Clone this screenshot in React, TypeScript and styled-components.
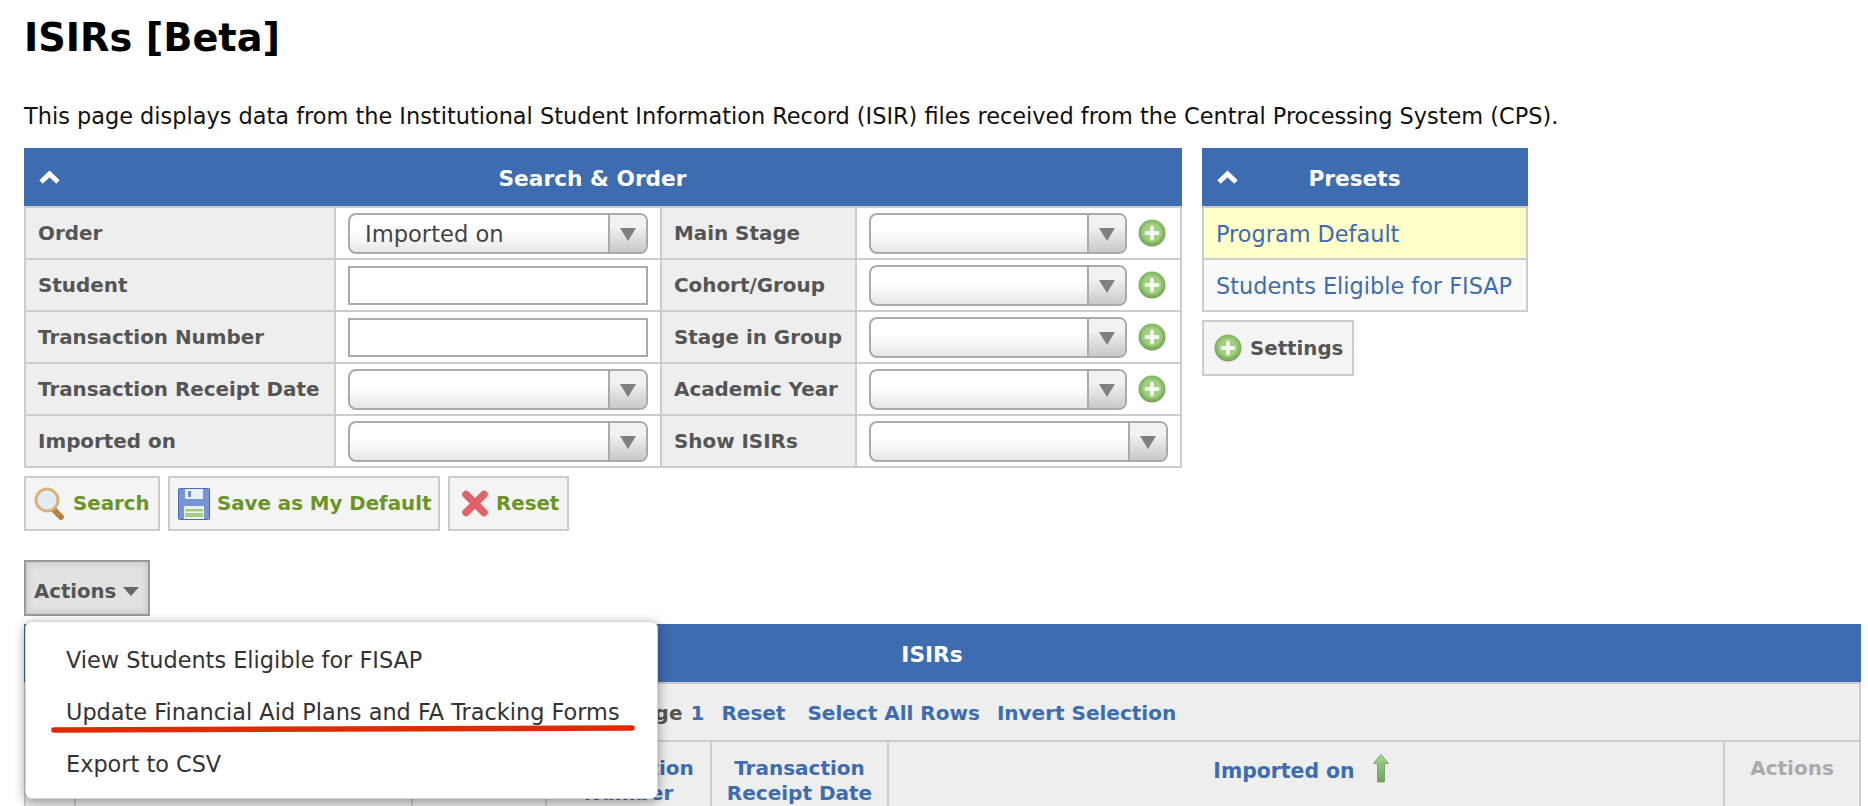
import styled, { createGlobalStyle } from "styled-components";

const GlobalStyle = createGlobalStyle`
  html, body {
    margin: 0;
    padding: 0;
    background: #fff;
    font-family: "DejaVu Sans", Verdana, sans-serif;
    font-size: 20px;
  }
`;

const Chevron = () => (
  <ChevronIcon width="21" height="14" viewBox="0 0 21 14">
    <path d="M2 12 L10.5 4 L19 12" fill="none" stroke="#fff" strokeWidth="5" />
  </ChevronIcon>
);

const PlusIcon = () => (
  <svg width="28" height="28" viewBox="0 0 28 28">
    <defs>
      <radialGradient id="plusFill" cx="50%" cy="45%" r="55%">
        <stop offset="0%" stopColor="#a9d38a" />
        <stop offset="70%" stopColor="#8fc06d" />
        <stop offset="100%" stopColor="#6fa050" />
      </radialGradient>
    </defs>
    <circle cx="14" cy="14" r="13.5" fill="url(#plusFill)" />
    <circle cx="14" cy="13.5" r="9.5" fill="#a0cf80" />
    <path d="M14 8.5 V19.5 M8.5 14 H19.5" stroke="#f4f8ee" strokeWidth="4" strokeLinecap="round" />
  </svg>
);

const SearchIcon = () => (
  <svg width="32" height="33" viewBox="0 0 32 33">
    <path d="M20 23 L27 30" stroke="#b9813f" strokeWidth="6" strokeLinecap="round" />
    <circle cx="13" cy="13" r="11" fill="#e3ebf5" stroke="#d9b27a" strokeWidth="3" />
  </svg>
);

const SaveIcon = () => (
  <svg width="32" height="32" viewBox="0 0 32 32">
    <rect x="0.5" y="0.5" width="31" height="31" rx="1" fill="#7394d6" stroke="#4a6cb8" />
    <rect x="7" y="1" width="18" height="10" fill="#e9eef8" />
    <rect x="10" y="3" width="3" height="6" fill="#6f8fcf" />
    <rect x="6" y="18" width="20" height="13" fill="#eef2ea" />
    <rect x="7" y="21" width="18" height="2.5" fill="#a8cc85" />
    <rect x="7" y="25" width="18" height="4" fill="#a8cc85" />
  </svg>
);

const CrossIcon = () => (
  <svg width="28" height="27" viewBox="0 0 28 27">
    <path d="M5 4.5 L23 22.5 M23 4.5 L5 22.5" stroke="#e0636a" strokeWidth="7.5" strokeLinecap="round" />
  </svg>
);

const UpArrow = () => (
  <svg width="16" height="29" viewBox="0 0 16 29">
    <defs>
      <linearGradient id="arrowFill" x1="0" y1="0" x2="0" y2="1">
        <stop offset="0%" stopColor="#a5d592" />
        <stop offset="100%" stopColor="#6ba35f" />
      </linearGradient>
    </defs>
    <path d="M8 0.5 L15.5 9.5 H11.5 V28 H4.5 V9.5 H0.5 Z" fill="url(#arrowFill)" stroke="#7aa96c" />
  </svg>
);

const SelectBox = ({ value }: { value?: string }) => (
  <Select>
    <SelectValue>{value}</SelectValue>
    <SelectArrow />
  </Select>
);

const filters = [
  { label: "Order", kind: "select", value: "Imported on", label2: "Main Stage", plus: true },
  { label: "Student", kind: "input", label2: "Cohort/Group", plus: true },
  { label: "Transaction Number", kind: "input", label2: "Stage in Group", plus: true },
  { label: "Transaction Receipt Date", kind: "select", label2: "Academic Year", plus: true },
  { label: "Imported on", kind: "select", label2: "Show ISIRs", plus: false },
];

const App = () => {
  return (
    <Page>
      <GlobalStyle />
      <Title>ISIRs [Beta]</Title>
      <Intro>
        This page displays data from the Institutional Student Information Record (ISIR) files
        received from the Central Processing System (CPS).
      </Intro>

      <TopRow>
        <SearchPanel>
          <PanelHeader>
            <Chevron />
            <PanelTitle>Search &amp; Order</PanelTitle>
          </PanelHeader>
          <FilterGrid>
            {filters.map((f) => (
              <FilterRow key={f.label}>
                <Label>{f.label}</Label>
                <Value $pr={12}>
                  {f.kind === "select" ? <SelectBox value={f.value} /> : <TextInput type="text" />}
                </Value>
                <Label>{f.label2}</Label>
                <Value $pr={f.plus ? 14 : 12}>
                  <SelectBox />
                  {f.plus && <PlusIcon />}
                </Value>
              </FilterRow>
            ))}
          </FilterGrid>
          <ButtonRow>
            <ToolButton $w={136} $pad={8}>
              <SearchIcon />
              Search
            </ToolButton>
            <ToolButton $w={272} $pad={8}>
              <SaveIcon />
              Save as My Default
            </ToolButton>
            <ToolButton $w={121} $pad={11}>
              <CrossIcon />
              Reset
            </ToolButton>
          </ButtonRow>
        </SearchPanel>

        <PresetsPanel>
          <PanelHeader>
            <Chevron />
            <PanelTitle>Presets</PanelTitle>
          </PanelHeader>
          <PresetList>
            <PresetItem $active>Program Default</PresetItem>
            <PresetItem>Students Eligible for FISAP</PresetItem>
          </PresetList>
          <SettingsButton>
            <PlusIcon />
            Settings
          </SettingsButton>
        </PresetsPanel>
      </TopRow>

      <ActionsWrap>
        <ActionsButton>
          Actions
          <Caret />
        </ActionsButton>
        <Menu>
          <MenuItem>View Students Eligible for FISAP</MenuItem>
          <MenuItem>Update Financial Aid Plans and FA Tracking Forms</MenuItem>
          <MenuItem>Export to CSV</MenuItem>
          <RedLine width="590" height="12" viewBox="0 0 590 12">
            <path d="M4 8 L582 6" stroke="#e02b00" strokeWidth="5.5" strokeLinecap="round" />
          </RedLine>
        </Menu>
      </ActionsWrap>

      <ResultsPanel>
        <PanelHeader>
          <Chevron />
          <PanelTitle>ISIRs</PanelTitle>
        </PanelHeader>
        <Toolbar>
          <PageLabel>Page</PageLabel>
          <ToolLink $ml={8}>1</ToolLink>
          <ToolLink $ml={17}>Reset</ToolLink>
          <ToolLink $ml={22}>Select All Rows</ToolLink>
          <ToolLink $ml={17}>Invert Selection</ToolLink>
        </Toolbar>
        <ColumnRow>
          <ColumnHead />
          <ColumnHead />
          <ColumnHead />
          <ColumnHead>
            Transaction
            <br />
            Number
          </ColumnHead>
          <ColumnHead>
            Transaction
            <br />
            Receipt Date
          </ColumnHead>
          <ImportedHead>
            Imported on
            <UpArrow />
          </ImportedHead>
          <ColumnHead $muted>Actions</ColumnHead>
        </ColumnRow>
      </ResultsPanel>
    </Page>
  );
};

export default App;

const Page = styled.div`
  box-sizing: border-box;
  width: 1868px;
  height: 806px;
  padding: 0 7px 0 24px;
  overflow: hidden;
`;

const Title = styled.h1`
  margin: 0;
  padding-top: 16px;
  font-size: 38.3px;
  line-height: 44px;
  font-weight: bold;
  color: #000;
`;

const Intro = styled.p`
  margin: 34px 0 0;
  font-size: 22.43px;
  line-height: 44px;
  color: #111;
  white-space: nowrap;
`;

const TopRow = styled.div`
  display: flex;
  align-items: flex-start;
  gap: 20px;
  margin-top: 10px;
`;

const SearchPanel = styled.div`
  width: 1158px;
`;

const PresetsPanel = styled.div`
  width: 326px;
`;

const PanelHeader = styled.div`
  display: flex;
  align-items: center;
  box-sizing: border-box;
  height: 58px;
  padding: 0 36px 0 15px;
  background: #3d6cb0;
  color: #fff;
`;

const ChevronIcon = styled.svg`
  flex: none;
  margin-right: -21px;
`;

const PanelTitle = styled.div`
  flex: 1;
  padding-top: 2px;
  text-align: center;
  font-weight: bold;
  font-size: 21.7px;
`;

const FilterGrid = styled.div`
  display: grid;
  grid-template-columns: 308px 324px 193px 323px;
  grid-auto-rows: 50px;
  gap: 2px;
  padding: 2px;
  background: #ccc;
`;

const FilterRow = styled.div`
  display: contents;
`;

const Label = styled.div`
  display: flex;
  align-items: center;
  padding-left: 12px;
  background: #eee;
  color: #555;
  font-weight: bold;
  font-size: 19.9px;
  white-space: nowrap;
`;

const Value = styled.div<{ $pr: number }>`
  display: flex;
  align-items: center;
  gap: 11px;
  padding: 0 ${(p) => p.$pr}px 0 12px;
  background: #fff;
`;

const Select = styled.div`
  flex: 1;
  display: flex;
  align-items: stretch;
  box-sizing: border-box;
  height: 41px;
  border: 2px solid #aaa;
  border-radius: 8px;
  overflow: hidden;
  background: linear-gradient(to bottom, #fff 45%, #e6e6e6 100%);
`;

const SelectValue = styled.div`
  flex: 1;
  padding-left: 15px;
  line-height: 38px;
  font-size: 22.6px;
  color: #444;
`;

const SelectArrow = styled.div`
  position: relative;
  flex: none;
  width: 36px;
  border-left: 2px solid #aaa;
  background: linear-gradient(to bottom, #f2f2f2 30%, #c9c9c9 100%);

  &::after {
    content: "";
    position: absolute;
    left: 10px;
    top: 13px;
    border-left: 8px solid transparent;
    border-right: 8px solid transparent;
    border-top: 13px solid #808080;
  }
`;

const TextInput = styled.input`
  flex: 1;
  min-width: 0;
  box-sizing: border-box;
  height: 39px;
  border: 2px solid #aaa;
  background: #fff;
  outline: none;
`;

const ButtonRow = styled.div`
  display: flex;
  gap: 8px;
  margin-top: 8px;
`;

const ToolButton = styled.div<{ $w: number; $pad: number }>`
  display: flex;
  align-items: center;
  gap: 7px;
  box-sizing: border-box;
  width: ${(p) => p.$w}px;
  height: 55px;
  padding-left: ${(p) => p.$pad}px;
  border: 2px solid #ccc;
  background: #f4f4f4;
  color: #6b9427;
  font-weight: bold;
  font-size: 19.8px;
  white-space: nowrap;
`;

const PresetList = styled.div`
  display: flex;
  flex-direction: column;
  gap: 2px;
  padding: 2px;
  background: #ccc;
`;

const PresetItem = styled.div<{ $active?: boolean }>`
  display: flex;
  align-items: center;
  height: 50px;
  padding: 2px 0 0 12px;
  box-sizing: border-box;
  background: ${(p) => (p.$active ? "#ffc" : "#f9f9f9")};
  color: #3d6cb0;
  font-size: 22.4px;
  white-space: nowrap;
`;

const SettingsButton = styled.div`
  display: flex;
  align-items: center;
  gap: 8px;
  box-sizing: border-box;
  width: 152px;
  height: 56px;
  margin-top: 8px;
  padding-left: 10px;
  border: 2px solid #ccc;
  background: #f4f4f4;
  color: #555;
  font-weight: bold;
  font-size: 19.8px;
`;

const ActionsWrap = styled.div`
  position: relative;
  margin-top: 29px;
  height: 56px;
`;

const ActionsButton = styled.div`
  display: flex;
  align-items: center;
  gap: 7px;
  box-sizing: border-box;
  width: 126px;
  height: 56px;
  padding: 7px 0 0 8px;
  border: 2px solid #999;
  background: #e2e2e2;
  box-shadow: inset 0 0 10px rgba(0, 0, 0, 0.14);
  color: #555;
  font-weight: bold;
  font-size: 19.7px;
`;

const Caret = styled.span`
  margin-top: 0;
  border-left: 8px solid transparent;
  border-right: 8px solid transparent;
  border-top: 9px solid #666;
`;

const Menu = styled.div`
  position: absolute;
  z-index: 5;
  top: 61px;
  left: 1px;
  box-sizing: border-box;
  width: 633px;
  height: 178px;
  padding: 12px 0 0;
  border: 1px solid #d4d4d4;
  border-radius: 7px;
  background: #fff;
  box-shadow: 0 3px 12px rgba(0, 0, 0, 0.4);
`;

const MenuItem = styled.div`
  height: 52px;
  padding-left: 40px;
  line-height: 52px;
  font-size: 22.4px;
  color: #333;
  white-space: nowrap;
`;

const RedLine = styled.svg`
  position: absolute;
  left: 24px;
  top: 100px;
`;

const ResultsPanel = styled.div`
  margin-top: 8px;
`;

const Toolbar = styled.div`
  display: flex;
  align-items: center;
  box-sizing: border-box;
  height: 60px;
  padding: 2px 0 0 601px;
  border: 2px solid #ccc;
  background: #eee;
  font-size: 20px;
  font-weight: bold;
  white-space: nowrap;
`;

const PageLabel = styled.span`
  color: #555;
`;

const ToolLink = styled.span<{ $ml: number }>`
  margin-left: ${(p) => p.$ml}px;
  color: #3d6cb0;
`;

const ColumnRow = styled.div`
  display: grid;
  grid-template-columns: 48px 335px 132px 163px 175px 834px 1fr;
  gap: 2px;
  height: 70px;
  padding: 0 2px;
  background: #ccc;
`;

const ColumnHead = styled.div<{ $muted?: boolean }>`
  padding-top: 14px;
  background: #eee;
  color: ${(p) => (p.$muted ? "#aaa" : "#3d6cb0")};
  font-weight: bold;
  font-size: 20px;
  line-height: 25px;
  text-align: center;
`;

const ImportedHead = styled(ColumnHead)`
  display: flex;
  justify-content: center;
  align-items: flex-start;
  gap: 18px;
  padding-top: 12px;
  padding-right: 10px;
  font-size: 20.4px;
  line-height: 34px;
`;
